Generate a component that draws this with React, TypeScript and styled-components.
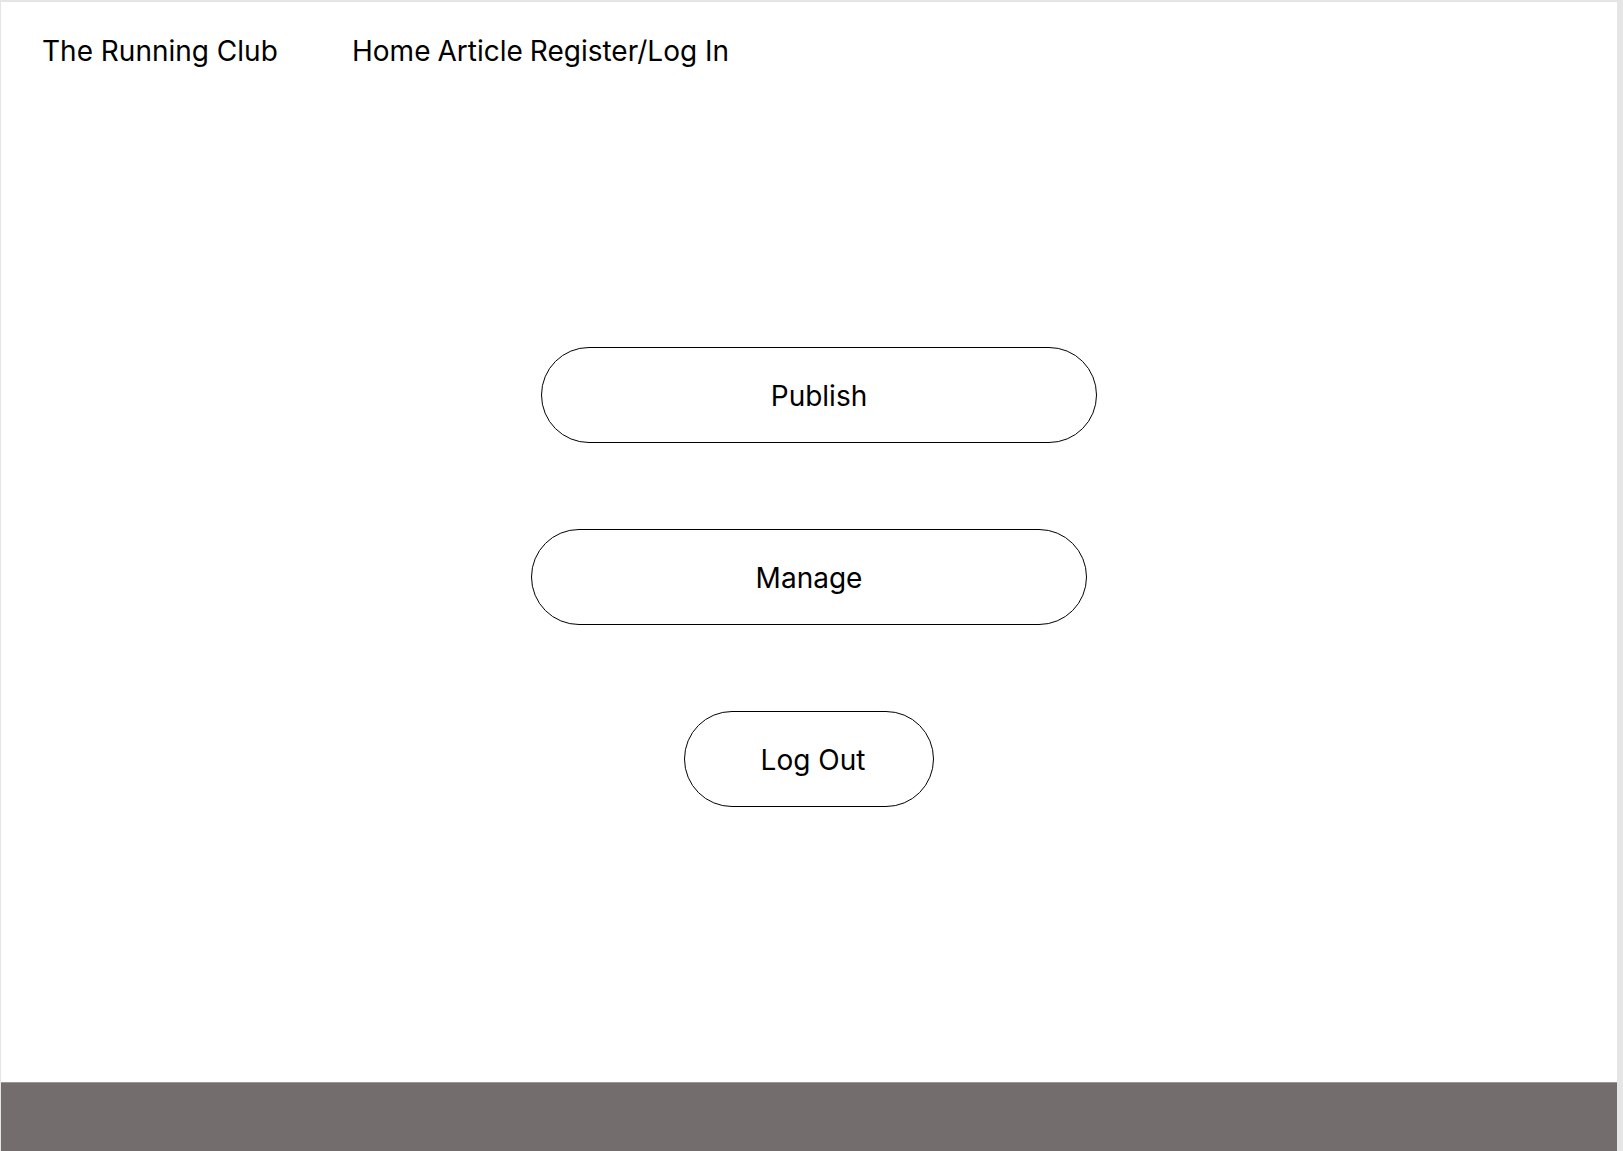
import styled, { createGlobalStyle } from 'styled-components';

const GlobalStyle = createGlobalStyle`
  html, body {
    margin: 0;
    padding: 0;
    background: #e5e5e5;
  }
  body {
    font-family: Inter, "Liberation Sans", sans-serif;
    color: #000;
  }
`;

// 外枠（上・左・右に薄いグレーが見えている）
const Frame = styled.div`
  height: 100vh;
  box-sizing: border-box;
  padding: 2px 6px 0 1px;
  display: flex;
`;

const Page = styled.div`
  flex: 1;
  background: #fff;
  display: flex;
  flex-direction: column;
`;

const Header = styled.header`
  display: flex;
  align-items: center;
  height: 96px;
  padding: 2px 0 0 41px;
  box-sizing: border-box;
  font-size: 28px;
`;

const Brand = styled.div`
  width: 310px;
`;

const Nav = styled.nav`
  display: flex;
  gap: 7px;
`;

const NavLink = styled.a`
  color: inherit;
  text-decoration: none;
  cursor: pointer;
`;

const Main = styled.main`
  flex: 1;
  display: flex;
  flex-direction: column;
  align-items: center;
  gap: 86px;
  padding-top: 249px;
`;

const PillButton = styled.button<{ $width: number; $shift?: number; $indent?: number }>`
  width: ${p => p.$width}px;
  height: 96px;
  margin-left: ${p => (p.$shift ?? 0) * 2}px;
  padding: 2px 0 0 ${p => p.$indent ?? 0}px;
  border: 1px solid #000;
  border-radius: 48px;
  background: #fff;
  font-family: inherit;
  font-size: 28px;
  color: #000;
  cursor: pointer;
`;

const Footer = styled.footer`
  height: 69px;
  box-sizing: border-box;
  background: #736e6d;
  border-top: 1px solid #9a9696;
`;

export default function App() {
  return (
    <>
      <GlobalStyle />
      <Frame>
        <Page>
          <Header>
            <Brand>The Running Club</Brand>
            <Nav>
              <NavLink>Home</NavLink>
              <NavLink>Article</NavLink>
              <NavLink>Register/Log In</NavLink>
            </Nav>
          </Header>
          <Main>
            <PillButton $width={556} $shift={10}>Publish</PillButton>
            <PillButton $width={556}>Manage</PillButton>
            <PillButton $width={250} $indent={8}>Log Out</PillButton>
          </Main>
          <Footer />
        </Page>
      </Frame>
    </>
  );
}
